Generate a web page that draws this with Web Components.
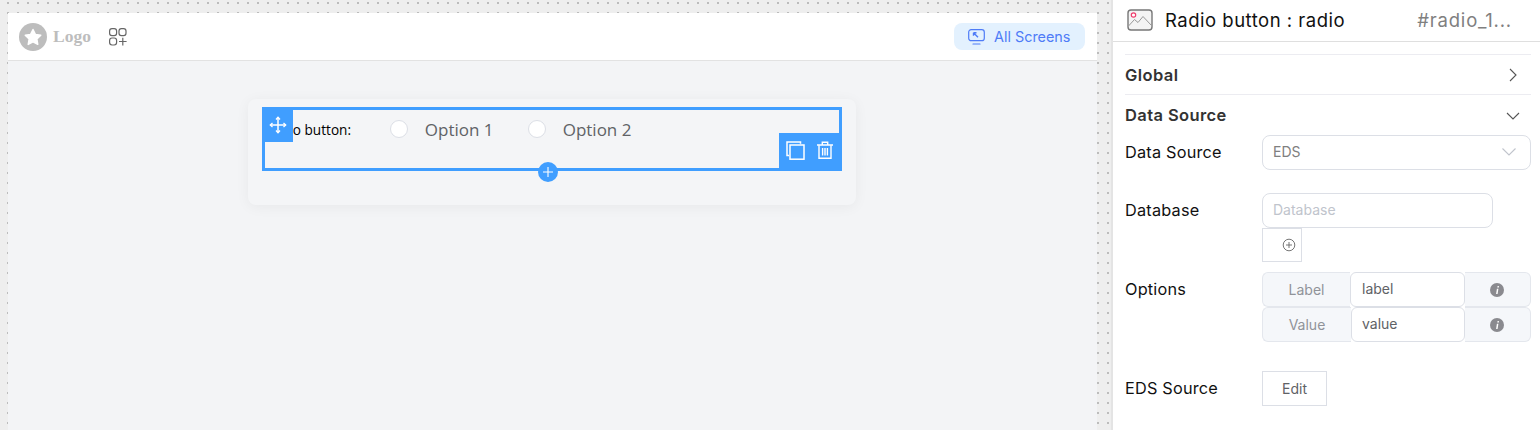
<!DOCTYPE html>
<html>
<head>
<meta charset="utf-8">
<title>Radio button</title>
<style>
    html, body { margin: 0; height: 100%; overflow: hidden; }
    body {
        width: 1540px;
        height: 430px;
        display: flex;
        font-family: Inter, "Liberation Sans", sans-serif;
        background-color: #eeeeee;
        background-image: radial-gradient(circle at 1px 1px, #bcbcbc 1px, transparent 1.3px);
        background-size: 10px 10px;
        background-position: 7px 2px;
    }
</style>
</head>
<body>
<editor-canvas>
    <top-bar></top-bar>
    <radio-card></radio-card>
</editor-canvas>
<props-panel></props-panel>

<script>
class EditorCanvas extends HTMLElement {
    constructor() {
        super();
        this.attachShadow({ mode: 'open' });
        this.shadowRoot.innerHTML = `
            <style>
                :host {
                    display: flex;
                    flex-direction: column;
                    width: 1089px;
                    height: 417px;
                    margin: 13px 14px 0 8px;
                    background: #f3f4f6;
                }
                .stage { display: flex; justify-content: center; padding: 38px 241px 0 240px; }
            </style>
            <slot name="bar"></slot>
            <div class="stage"><slot></slot></div>
        `;
    }

    connectedCallback() {
        this.querySelector('top-bar').setAttribute('slot', 'bar');
    }
}

class TopBar extends HTMLElement {
    constructor() {
        super();
        this.attachShadow({ mode: 'open' });
        this.shadowRoot.innerHTML = `
            <style>
                :host {
                    display: flex;
                    align-items: center;
                    height: 47px;
                    padding: 0 12px 0 11px;
                    background: #fff;
                    border-bottom: 1px solid #e2e2e2;
                }
                .logo { display: flex; align-items: center; gap: 6px; font: bold 17.5px "Liberation Serif", serif; color: #bdbdbd; }
                .grid { margin-left: 18px; display: block; }
                .screens {
                    margin-left: auto;
                    display: flex;
                    align-items: center;
                    gap: 9px;
                    height: 27px;
                    width: 131px;
                    box-sizing: border-box;
                    padding-left: 14px;
                    border-radius: 8px;
                    background: #e3f1fe;
                    color: #4f7cf7;
                    font-size: 14.4px;
                }
            </style>
            <div class="logo">
                <svg width="28" height="28" viewBox="0 0 28 28">
                    <circle cx="14" cy="14" r="14" fill="#bdbdbd"/>
                    <path d="M14 6.5l2.4 4.9 5.4.8-3.9 3.8.9 5.4-4.8-2.6-4.8 2.6.9-5.4-3.9-3.8 5.4-.8z" fill="#fff" stroke="#fff" stroke-width="1.4" stroke-linejoin="round"/>
                </svg>
                Logo
            </div>
            <svg class="grid" width="18" height="18" viewBox="0 0 18 18" fill="none" stroke="#666" stroke-width="1.2">
                <rect x="0.6" y="0.6" width="7" height="7" rx="2.4"/>
                <rect x="10" y="0.6" width="7" height="7" rx="2.4"/>
                <rect x="0.6" y="10" width="7" height="7" rx="2.4"/>
                <path d="M10 13.5h7.6M13.8 9.8v7.6"/>
            </svg>
            <div class="screens">
                <svg width="17" height="16" viewBox="0 0 17 16" fill="none" stroke="#4f7cf7" stroke-width="1.2">
                    <rect x="0.7" y="0.7" width="15.6" height="11" rx="2.5"/>
                    <path d="M5 15h7" stroke-linecap="round"/>
                    <path d="M5.5 3.7l4.5 4.6M5.5 3.7h3M5.5 3.7v3" stroke-width="1.4"/>
                </svg>
                All Screens
            </div>
        `;
    }
}

class RadioCard extends HTMLElement {
    constructor() {
        super();
        this.attachShadow({ mode: 'open' });
        this.shadowRoot.innerHTML = `
            <style>
                :host {
                    display: block;
                    width: 608px;
                    height: 106px;
                    box-sizing: border-box;
                    padding: 8px 14px;
                    border-radius: 8px;
                    background: #f4f5f7;
                    box-shadow: 0 2px 14px rgba(0, 0, 0, 0.05);
                }
                .selected {
                    position: relative;
                    height: 64px;
                    box-sizing: border-box;
                    border: 3px solid #409eff;
                }
                .row { display: flex; align-items: center; height: 38px; }
                .caption { width: 86px; margin-right: 39px; display: flex; justify-content: flex-end; font: 13.6px "Open Sans", sans-serif; color: #000; white-space: nowrap; flex: none; }
                .radio { width: 18px; height: 18px; box-sizing: border-box; border-radius: 50%; background: #fff; border: 1px solid #dcdfe6; flex: none; }
                .text { margin-left: 16.8px; margin-right: 34.3px; font: 17px "Open Sans", sans-serif; color: #606266; white-space: nowrap; }
                .move {
                    position: absolute; left: -3px; top: -3px;
                    width: 31px; height: 35px;
                    background: #409eff;
                    display: flex; align-items: center; justify-content: center;
                }
                .actions {
                    position: absolute; right: -3px; bottom: -3px;
                    width: 63px; height: 38px;
                    box-sizing: border-box;
                    padding: 0 0 4px 7px;
                    background: #409eff;
                    display: flex; align-items: center; gap: 11px;
                }
                .add {
                    position: absolute; left: 273px; bottom: -14px;
                    width: 20px; height: 20px; border-radius: 50%;
                    background: #409eff;
                    display: flex; align-items: center; justify-content: center;
                }
            </style>
            <div class="selected">
                <div class="row">
                    <div class="caption"><span>Radio button:</span></div>
                    <span class="radio"></span><span class="text">Option 1</span>
                    <span class="radio"></span><span class="text">Option 2</span>
                </div>
                <div class="move">
                    <svg width="18" height="18" viewBox="0 0 18 18" fill="none" stroke="#fff" stroke-width="1.5">
                        <path d="M9 1.5v15M1.5 9h15"/>
                        <path d="M7 3.5l2-2.2 2 2.2M7 14.5l2 2.2 2-2.2M3.5 7l-2.2 2 2.2 2M14.5 7l2.2 2-2.2 2" stroke-width="1.3"/>
                    </svg>
                </div>
                <div class="actions">
                    <svg width="19" height="19" viewBox="0 0 19 19" fill="none" stroke="#fff" stroke-width="1.5">
                        <path d="M3 14.5H1V1h13.5v1.8"/>
                        <rect x="4" y="4" width="14" height="14.2"/>
                    </svg>
                    <svg width="18" height="18" viewBox="0 0 18 18" fill="none" stroke="#fff" stroke-width="1.4">
                        <path d="M1 4h16M6.3 3.6V1.2h5.4v2.4"/>
                        <path d="M3 4.2v13h12v-13"/>
                        <path d="M6.6 7v7.5M9 7v7.5M11.4 7v7.5"/>
                    </svg>
                </div>
                <div class="add">
                    <svg width="12" height="12" viewBox="0 0 12 12" stroke="#fff" stroke-width="1.1"><path d="M6 1v10M1 6h10"/></svg>
                </div>
            </div>
        `;
    }
}

class PropRow extends HTMLElement {
    constructor() {
        super();
        this.attachShadow({ mode: 'open' });
        this.shadowRoot.innerHTML = `
            <style>
                :host { display: flex; align-items: flex-start; }
                .label { width: 137px; flex: none; font-size: 16.3px; letter-spacing: 0.2px; line-height: 20px; color: #111; padding-top: 7px; }
                .body { flex: 1; min-width: 0; }
            </style>
            <div class="label"></div>
            <div class="body"><slot></slot></div>
        `;
    }

    connectedCallback() {
        this.shadowRoot.querySelector('.label').textContent = this.getAttribute('label');
    }
}

class PropSection extends HTMLElement {
    constructor() {
        super();
        this.attachShadow({ mode: 'open' });
        this.shadowRoot.innerHTML = `
            <style>
                :host {
                    display: flex; align-items: center; justify-content: space-between;
                    height: 39px; border-top: 1px solid #ececf1;
                    font-size: 16.5px; letter-spacing: 0.4px; font-weight: 600; color: #333;
                    padding-right: 11px;
                }
                :host([open]) svg { margin-top: 2px; }
            </style>
            <span class="name"></span>
            <svg width="14" height="14" viewBox="0 0 14 14" fill="none" stroke="#555" stroke-width="1.1"></svg>
        `;
    }

    connectedCallback() {
        this.shadowRoot.querySelector('.name').textContent = this.getAttribute('name');
        this.shadowRoot.querySelector('svg').innerHTML = this.hasAttribute('open')
            ? '<path d="M1 4l6 6 6-6"/>'
            : '<path d="M4 1l6 6-6 6"/>';
    }
}

class AddonRow extends HTMLElement {
    constructor() {
        super();
        this.attachShadow({ mode: 'open' });
        this.shadowRoot.innerHTML = `
            <style>
                :host { display: flex; height: 35px; font-size: 14px; }
                div { box-sizing: border-box; display: flex; align-items: center; }
                .pre, .post { background: #f5f7fa; border: 1px solid #e4e7ed; color: #909399; justify-content: center; }
                .pre { width: var(--pre-width, 88px); border-right: 0; border-radius: 6px 0 0 6px; }
                .post { flex: 1; border-left: 0; border-radius: 0 6px 6px 0; padding-right: 2px; }
                .field { flex: 0 0 auto; width: calc(203px - var(--pre-width, 88px)); background: #fff; border: 1px solid #dcdfe6; border-radius: 6px; padding: 0 0 2px var(--field-pad, 11px); color: #606266; }
            </style>
            <div class="pre"></div>
            <div class="field"></div>
            <div class="post">
                <svg width="14" height="14" viewBox="0 0 14 14">
                    <circle cx="7" cy="7" r="7" fill="#8a8a8f"/>
                    <path d="M7.6 3h1.3v1.5H7.3zM6.9 5.8h1.5L7.6 11H6.1z" fill="#fff"/>
                </svg>
            </div>
        `;
    }

    connectedCallback() {
        this.shadowRoot.querySelector('.pre').textContent = this.getAttribute('label');
        this.shadowRoot.querySelector('.field').textContent = this.getAttribute('value');
    }
}

class PropsPanel extends HTMLElement {
    constructor() {
        super();
        this.attachShadow({ mode: 'open' });
        this.shadowRoot.innerHTML = `
            <style>
                :host {
                    display: block;
                    width: 429px;
                    height: 430px;
                    box-sizing: border-box;
                    background: #fff;
                    border-left: 2px solid #e4e4e4;
                }
                .head {
                    display: flex; align-items: center;
                    height: 42px; box-sizing: border-box;
                    padding: 0 0 2px 14px;
                    border-bottom: 1px solid #dfdfdf;
                }
                .title { margin-left: 12px; font-size: 18.5px; letter-spacing: 0.5px; color: #111; white-space: nowrap; }
                .id { margin-left: auto; margin-right: 28px; font-size: 18.5px; letter-spacing: 0.8px; color: #808080; white-space: nowrap; }
                .content { padding: 12px 9px 0 12px; }
                .select, .input {
                    box-sizing: border-box; height: 35px;
                    border: 1px solid #dcdfe6; border-radius: 8px;
                    display: flex; align-items: center; padding: 0 0 2px 10px;
                    font-size: 14px;
                }
                .select { justify-content: space-between; padding-right: 14px; color: #808080; }
                .input { width: 231px; color: #c0c4cc; }
                .plus {
                    width: 40px; height: 34px; box-sizing: border-box;
                    border: 1px solid #dcdfe6;
                    display: flex; align-items: center; justify-content: flex-end; padding-right: 5px;
                }
                .edit {
                    width: 65px; height: 35px; box-sizing: border-box;
                    border: 1px solid #dcdfe6;
                    display: flex; align-items: center; justify-content: center;
                    font-size: 14px; color: #606266;
                }
                .r1 { margin-top: 1px; }
                .r2 { margin-top: 23px; }
                .r3 { margin-top: 10px; }
                .r4 { margin-top: 29px; }
                .second { --pre-width: 89px; --field-pad: 10px; }
            </style>
            <div class="head">
                <svg width="26" height="22" viewBox="0 0 26 22" fill="none">
                    <rect x="1" y="1" width="24" height="20" rx="3" fill="#f4f4f4" stroke="#777" stroke-width="1.4"/>
                    <path d="M1.5 17l6-6.5 3.5 3 5-6 8.500 9" stroke="#999" stroke-width="1"/>
                    <circle cx="6.500" cy="6" r="2.200" stroke="#ee3d6c" stroke-width="1.200" fill="#fff"/>
                </svg>
                <span class="title">Radio button : radio</span>
                <span class="id">#radio_1...</span>
            </div>
            <div class="content">
                <prop-section name="Global"></prop-section>
                <prop-section name="Data Source" open></prop-section>
                <prop-row class="r1" label="Data Source">
                    <div class="select">EDS
                        <svg width="14" height="8" viewBox="0 0 14 8" fill="none" stroke="#c0c4cc" stroke-width="1.100"><path d="M0.500 0.500l6.500 6.500 6.500-6.500"/></svg>
                    </div>
                </prop-row>
                <prop-row class="r2" label="Database">
                    <div class="input">Database</div>
                    <div class="plus">
                        <svg width="14" height="14" viewBox="0 0 14 14" fill="none" stroke="#666" stroke-width="0.900">
                            <circle cx="7" cy="7" r="5.800"/><path d="M7 4v6M4 7h6"/>
                        </svg>
                    </div>
                </prop-row>
                <prop-row class="r3" label="Options">
                    <addon-row label="Label" value="label"></addon-row>
                    <addon-row class="second" label="Value" value="value"></addon-row>
                </prop-row>
                <prop-row class="r4" label="EDS Source">
                    <div class="edit">Edit</div>
                </prop-row>
            </div>
        `;
    }
}

customElements.define('prop-row', PropRow);
customElements.define('prop-section', PropSection);
customElements.define('addon-row', AddonRow);
customElements.define('top-bar', TopBar);
customElements.define('radio-card', RadioCard);
customElements.define('editor-canvas', EditorCanvas);
customElements.define('props-panel', PropsPanel);
</script>
</body>
</html>
